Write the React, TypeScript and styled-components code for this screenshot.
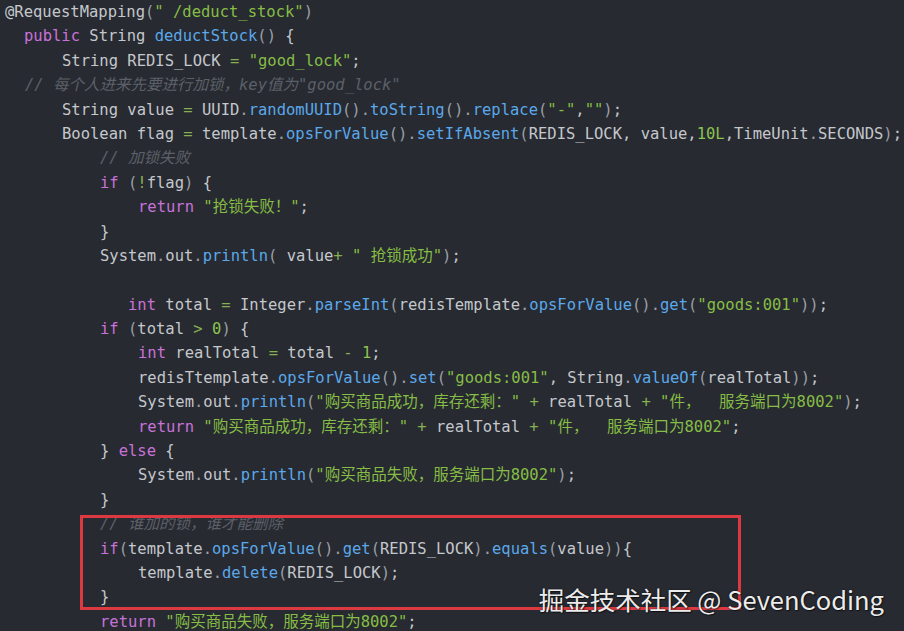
import React from 'react'
import styled, { createGlobalStyle } from 'styled-components'

const GlobalStyle = createGlobalStyle`
  html, body {
    margin: 0;
    padding: 0;
    background: #272a31;
  }
`

const Editor = styled.div`
  position: relative;
  width: 904px;
  height: 631px;
  overflow: hidden;
  background: #272a31;
  padding: 0 0 0 5px;
  box-sizing: border-box;
  font-family: "DejaVu Sans Mono", "Noto Sans CJK SC", monospace;
  font-size: 15.5px;
  line-height: 24.4px;
  color: #c4c7cb;
`

const Line = styled.div<{ $indent: number }>`
  padding-left: ${(p) => p.$indent}px;
  height: 24.4px;
  white-space: pre;
`

const Highlight = styled.div`
  position: relative;

  &::after {
    content: '';
    position: absolute;
    top: 3px;
    bottom: 0;
    left: 75px;
    width: 661px;
    border: 3px solid #dc3a40;
    box-sizing: border-box;
    pointer-events: none;
  }
`

const tokenColors: Record<string, string> = {
  k: '#c772d8',
  f: '#5ba8ea',
  s: '#86bd45',
  n: '#8cc450',
  o: '#86b052',
  d: '#9a9fa6',
  c: '#5c6068',
}

const Token = styled.span<{ $kind: string }>`
  color: ${(p) => tokenColors[p.$kind] || 'inherit'};
  font-style: ${(p) => (p.$kind === 'c' ? 'italic' : 'normal')};
`

const Watermark = styled.div`
  position: absolute;
  right: 20px;
  bottom: 17px;
  font-family: "Noto Sans CJK SC", "Noto Sans", sans-serif;
  font-size: 25.5px;
  line-height: 30px;
  color: #ececec;
  text-shadow: 0 0 2px rgba(0, 0, 0, 0.7), 1px 1px 1px rgba(0, 0, 0, 0.5);
  white-space: pre;
`

// [indent px, markup]  §x{...} marks a coloured token
const CODE: Array<[number, string]> = [
  [0, '@RequestMapping§d{(}§s{" /deduct_stock"}§d{)}'],
  [19, '§k{public} String §f{deductStock}§d{()} {'],
  [57, 'String REDIS_LOCK §o{=} §s{"good_lock"};'],
  [20, '§c{// 每个人进来先要进行加锁，key值为"good_lock"}'],
  [57, 'String value §o{=} UUID§d{.}§f{randomUUID}§d{().}§f{toString}§d{().}§f{replace}§d{(}§s{"-"},§s{""}§d{)};'],
  [57, 'Boolean flag §o{=} template§d{.}§f{opsForValue}§d{().}§f{setIfAbsent}§d{(}REDIS_LOCK, value,§n{10L},TimeUnit§d{.}SECONDS§d{)};'],
  [95, '§c{// 加锁失败}'],
  [95, '§k{if} §d{(}§o{!}flag§d{)} {'],
  [133, '§k{return} §s{"抢锁失败！"};'],
  [95, '}'],
  [95, 'System§d{.}out§d{.}§f{println}§d{(} value§o{+} §s{" 抢锁成功"}§d{)};'],
  [0, ''],
  [123, '§k{int} total §o{=} Integer§d{.}§f{parseInt}§d{(}redisTemplate§d{.}§f{opsForValue}§d{().}§f{get}§d{(}§s{"goods:001"}§d{))};'],
  [95, '§k{if} §d{(}total §o{>} §n{0}§d{)} {'],
  [133, '§k{int} realTotal §o{=} total §o{-} §n{1};'],
  [133, 'redisTtemplate§d{.}§f{opsForValue}§d{().}§f{set}§d{(}§s{"goods:001"}, String§d{.}§f{valueOf}§d{(}realTotal§d{))};'],
  [133, 'System§d{.}out§d{.}§f{println}§d{(}§s{"购买商品成功，库存还剩："} §o{+} realTotal §o{+} §s{"件，  服务端口为8002"}§d{)};'],
  [133, '§k{return} §s{"购买商品成功，库存还剩："} §o{+} realTotal §o{+} §s{"件，  服务端口为8002"};'],
  [95, '} §k{else} {'],
  [133, 'System§d{.}out§d{.}§f{println}§d{(}§s{"购买商品失败，服务端口为8002"}§d{)};'],
  [95, '}'],
]

const BOXED: Array<[number, string]> = [
  [95, '§c{// 谁加的锁，谁才能删除}'],
  [95, '§k{if}§d{(}template§d{.}§f{opsForValue}§d{().}§f{get}§d{(}REDIS_LOCK§d{).}§f{equals}§d{(}value§d{))}{'],
  [133, 'template§d{.}§f{delete}§d{(}REDIS_LOCK§d{)};'],
  [95, '}'],
]

const TAIL: Array<[number, string]> = [
  [95, '§k{return} §s{"购买商品失败，服务端口为8002"};'],
]

const renderMarkup = (src: string) => {
  const out: React.ReactNode[] = []
  const re = /§(\w)\{([^}]*)\}/g
  let last = 0
  let m: RegExpExecArray | null
  let i = 0
  while ((m = re.exec(src))) {
    if (m.index > last) out.push(<span key={i++}>{src.slice(last, m.index)}</span>)
    out.push(<Token key={i++} $kind={m[1]}>{m[2]}</Token>)
    last = m.index + m[0].length
  }
  if (last < src.length) out.push(<span key={i++}>{src.slice(last)}</span>)
  return out
}

const CodeLines = ({ lines }: { lines: Array<[number, string]> }) => (
  <>
    {lines.map(([indent, text], idx) => (
      <Line key={idx} $indent={indent}>{renderMarkup(text)}</Line>
    ))}
  </>
)

const App = () => {
  return (
    <>
      <GlobalStyle />
      <Editor>
        <CodeLines lines={CODE} />
        <Highlight>
          <CodeLines lines={BOXED} />
        </Highlight>
        <CodeLines lines={TAIL} />
        <Watermark>掘金技术社区 @ SevenCoding</Watermark>
      </Editor>
    </>
  )
}

export default App
